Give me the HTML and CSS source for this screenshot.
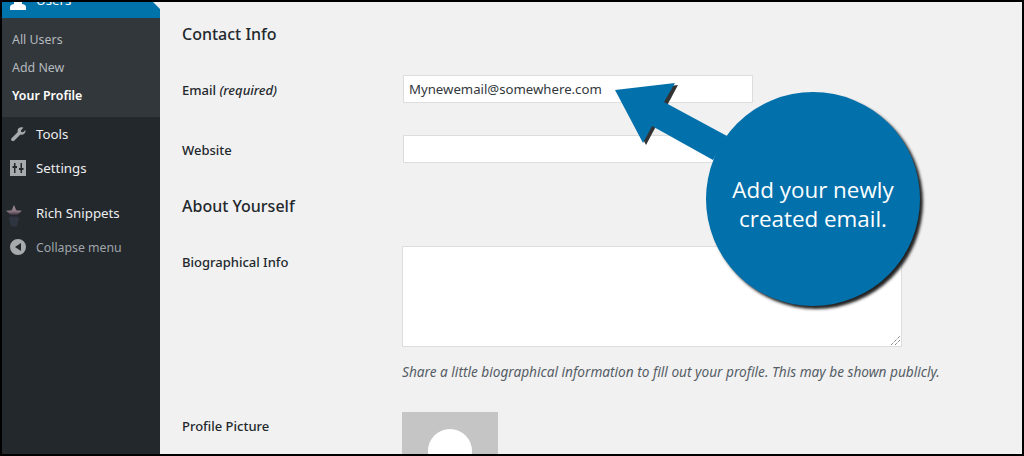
FILE: index.html
```html
<!DOCTYPE html>
<html lang="en">
<head>
  <meta charset="UTF-8" />
  <title>Profile</title>
  <link rel="stylesheet" href="styles.css">
</head>
<body>

<div class="frame">
  <div class="sidebar">
    <div class="menu-current">
      <svg class="icon-users" viewBox="0 0 16 8"><path d="M0 8V5q0-2 2-2.500L4 2V0h8v2l2 .5q2 .5 2 2.500v3q-1 0-2 0H2q-1 0-2 0z" fill="#fff"/></svg>
      <span class="current-label">Users</span>
    </div>
    <div class="submenu">
      <a>All Users</a>
      <a>Add New</a>
      <a class="active">Your Profile</a>
    </div>
    <div class="menu-item tools">
      <svg class="menu-icon" viewBox="0 0 20 20"><path d="M16.7 2.200l-3 3 .4 2.300 2.200.4 3-3c.3 2-.3 3.600-1.600 4.800-1.300 1.200-2.900 1.400-4.600.8L5.200 18.400c-.8.8-2.100.8-2.900 0l-.3-.3c-.8-.8-.8-2.100 0-2.900l7.700-7.600c-.5-1.800-.2-3.400 1.100-4.700 1.400-1.300 3.900-1.600 5.900-.7z" fill="#a7aaad"/></svg>
      <span>Tools</span>
    </div>
    <div class="menu-item settings">
      <svg class="menu-icon" viewBox="0 0 16 16"><path fill-rule="evenodd" d="M0 0h16v16H0zM4 3v3H2.500v2H4v5h1.500V8H7V6H5.500V3zM10.500 3v5H9v2h1.500v3H12v-3h1.500V8H12V3z" fill="#a7aaad"/></svg>
      <span>Settings</span>
    </div>
    <div class="menu-item snippets">
      <svg class="star-icon" viewBox="0 0 16 22"><defs><linearGradient id="starFade" x1="0" y1="0" x2="0" y2="1"><stop offset="0" stop-color="#a39498"/><stop offset=".45" stop-color="#84707c"/><stop offset=".7" stop-color="#25242c"/><stop offset="1" stop-color="#3d4656"/></linearGradient></defs><path d="M8 0l2.300 5.200L16 5.800l-4.300 3.800 1.200 5.400L8 12.300 3.100 15l1.200-5.400L0 5.800l5.700-.6z" fill="url(#starFade)"/><path d="M3.500 14.500L8 12.300l4.500 2.200-1.500 7H5z" fill="#333a48" opacity=".7"/></svg>
      <span>Rich Snippets</span>
    </div>
    <div class="menu-item collapse">
      <svg class="menu-icon" viewBox="0 0 16 16"><path fill-rule="evenodd" d="M8 0a8 8 0 1 0 0 16A8 8 0 0 0 8 0zM11 4v8L5 8z" fill="#a7aaad"/></svg>
      <span>Collapse menu</span>
    </div>
  </div>

  <div class="content">
    <h2 class="contact-title">Contact Info</h2>
    <div class="field-row email-row">
      <label>Email <em>(required)</em></label>
      <div class="text-input">Mynewemail@somewhere.com</div>
    </div>
    <div class="field-row website-row">
      <label>Website</label>
      <div class="text-input"></div>
    </div>
    <h2 class="about-title">About Yourself</h2>
    <div class="field-row bio-row">
      <label>Biographical Info</label>
      <div class="bio-col">
        <div class="textarea">
          <svg class="resize-grip" viewBox="0 0 9 9"><path d="M0 9L9 0M4 9l5-5" stroke="#555" stroke-width="1" stroke-dasharray="1 1" fill="none"/></svg>
        </div>
        <p class="hint">Share a little biographical information to fill out your profile. This may be shown publicly.</p>
      </div>
    </div>
    <div class="field-row picture-row">
      <label>Profile Picture</label>
      <div class="avatar"><div class="avatar-head"></div></div>
    </div>
  </div>

  <svg class="callout-arrow" viewBox="0 0 1024 456">
    <path class="arrow-shadow" d="M615 90L675 83 643 143z"/>
    <path class="arrow-body" d="M615 90L675 83 664 102 727 136 713 160 652 126 643 143z"/>
  </svg>
  <div class="callout">Add your newly<br>created email.</div>
</div>

</body>
</html>
```

FILE: styles.css
```css
html, body {
  margin: 0;
  padding: 0;
  height: 456px;
  overflow: hidden;
  background: #f1f1f1;
  font-family: "Noto Sans", "Open Sans", sans-serif;
  color: #23282d;
}

.frame {
  position: relative;
  display: flex;
  height: 456px;
  box-sizing: border-box;
  border: 2px solid #000;
  overflow: hidden;
}

/* admin menu */
.sidebar {
  width: 158px;
  flex-shrink: 0;
  background: #23282d;
  font-size: 13.3px;
  color: #eee;
}

.menu-current {
  position: relative;
  display: flex;
  height: 16px;
  background: #0073aa;
  overflow: hidden;
}

.menu-current::after {
  content: "";
  position: absolute;
  right: 0;
  top: 0;
  width: 7px;
  height: 7px;
  background: #f1f1f1;
  clip-path: polygon(0 0, 100% 0, 100% 100%);
}

.icon-users {
  width: 16px;
  height: 8px;
  margin-left: 8px;
}

.current-label {
  margin-left: 10px;
  margin-top: -11px;
  color: #fff;
}

.submenu {
  display: flex;
  flex-direction: column;
  background: #32373c;
  padding: 8px 0 7px 10px;
  font-size: 12.4px;
  color: #b4b9be;
}

.submenu a {
  height: 28px;
  line-height: 28px;
}

.submenu .active {
  color: #fff;
  font-weight: 600;
}

.menu-item {
  display: flex;
  align-items: center;
  height: 34px;
}

.menu-icon {
  width: 16px;
  height: 16px;
  margin: 0 10px 0 8px;
}

.tools {
  height: 33px;
  margin-bottom: 1px;
}

.snippets {
  margin-top: 11px;
}

.star-icon {
  width: 16px;
  height: 22px;
  margin: 6px 14px 0 4px;
  flex-shrink: 0;
}

.collapse {
  font-size: 12.3px;
  color: #a0a5aa;
}

/* profile form */
.content {
  flex: 1;
  padding-left: 22px;
}

h2 {
  margin: 0;
  font-size: 16px;
  font-weight: 500;
  line-height: 22px;
}

.contact-title {
  margin-top: 21px;
}

.field-row {
  display: flex;
}

.field-row label {
  width: 221px;
  flex-shrink: 0;
  font-size: 13px;
  font-weight: 500;
}

.field-row em {
  font-weight: 500;
}

.text-input {
  box-sizing: border-box;
  width: 350px;
  height: 28px;
  padding: 0 5px;
  background: #fff;
  border: 1px solid #ddd;
  font-size: 13.2px;
  line-height: 26px;
  color: #32373c;
}

.email-row {
  margin-top: 30px;
  line-height: 30px;
}

.website-row {
  margin-top: 30px;
  line-height: 30px;
}

.about-title {
  margin-top: 30px;
}

.bio-row {
  margin-top: 29px;
}

.bio-row label {
  line-height: 32px;
  width: 220px;
}

.textarea {
  position: relative;
  box-sizing: border-box;
  width: 500px;
  height: 101px;
  background: #fff;
  border: 1px solid #ddd;
}

.resize-grip {
  position: absolute;
  right: 1px;
  bottom: 1px;
  width: 9px;
  height: 9px;
}

.hint {
  margin: 15px 0 0;
  font-size: 13.65px;
  line-height: 20px;
  font-style: italic;
  color: #555d66;
  white-space: nowrap;
}

.picture-row {
  margin-top: 30px;
}

.picture-row label {
  width: 220px;
  line-height: 28px;
}

.avatar {
  position: relative;
  width: 96px;
  height: 96px;
  background: #c4c5c4;
  overflow: hidden;
}

.avatar-head {
  width: 44px;
  height: 44px;
  margin: 17px auto 0;
  border-radius: 50%;
  background: #fff;
}

/* annotation drawn over the page */
.callout-arrow {
  position: absolute;
  left: -2px;
  top: -2px;
  width: 1024px;
  height: 456px;
}

.arrow-body {
  fill: #0270ab;
}

.arrow-shadow {
  fill: #333;
  transform: translate(3px, 2px);
}

.callout {
  position: absolute;
  left: 704px;
  top: 90px;
  width: 214px;
  height: 214px;
  box-sizing: border-box;
  padding-top: 10px;
  display: flex;
  align-items: center;
  justify-content: center;
  text-align: center;
  border-radius: 50%;
  background: #0270ab;
  box-shadow: 3px 3px 3px #222;
  color: #fff;
  font-family: "Open Sans", sans-serif;
  font-size: 22.4px;
  line-height: 29px;
}
```
